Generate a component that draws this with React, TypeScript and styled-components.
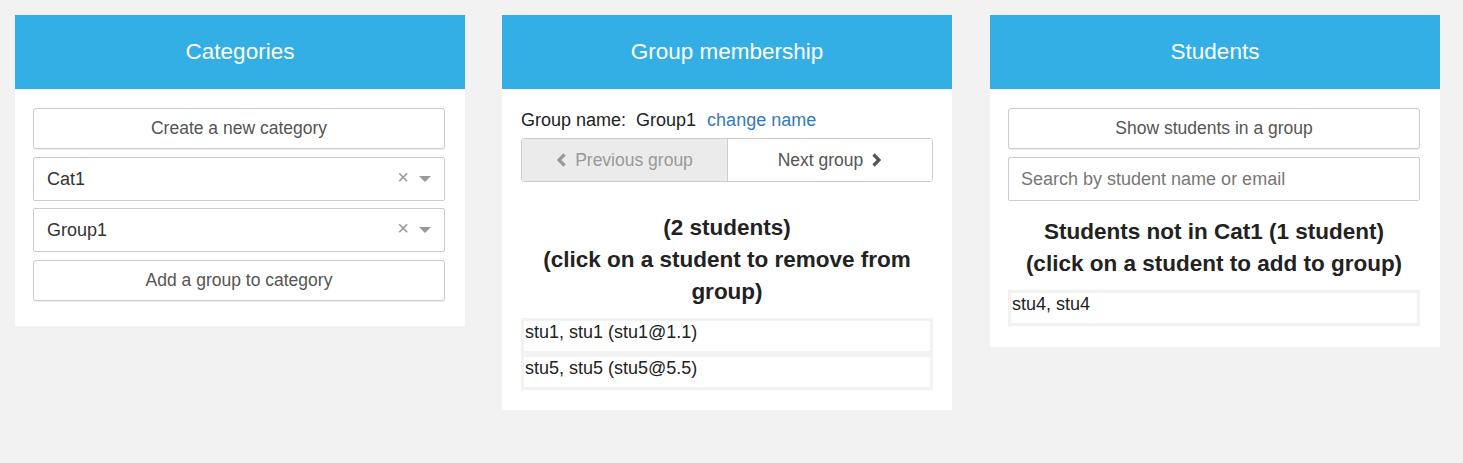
import React from 'react'
import styled, { createGlobalStyle } from 'styled-components'

const Global = createGlobalStyle`
  html, body {
    margin: 0;
    background: #f2f2f2;
    font-family: "Liberation Sans", Arial, sans-serif;
    color: #333;
  }
`

const Page = styled.div`
  display: flex;
  align-items: flex-start;
  gap: 37px;
  padding: 15px;
`

const Panel = styled.section<{ $shift?: number }>`
  width: 450px;
  background: #fff;
  flex-shrink: 0;
  margin-left: ${p => p.$shift ?? 0}px;
`

const Header = styled.h2`
  margin: 0;
  height: 74px;
  background: #33afe6;
  color: #fff;
  font-size: 22.5px;
  font-weight: normal;
  display: flex;
  align-items: center;
  justify-content: center;
`

const Body = styled.div<{ $bottom?: number; $left?: number }>`
  padding: 19px ${p => 38 - (p.$left ?? 18)}px ${p => p.$bottom ?? 20}px ${p => p.$left ?? 18}px;
  display: flex;
  flex-direction: column;
`

const Button = styled.button`
  height: 41px;
  width: 100%;
  background: #fff;
  border: 1px solid #ccc;
  border-radius: 3px;
  box-shadow: 0 1px 1px rgba(0, 0, 0, 0.08);
  font-family: inherit;
  font-size: 17.5px;
  color: #555;
  cursor: pointer;
`

const SelectBox = styled.div`
  height: 44px;
  box-sizing: border-box;
  border: 1px solid #ccc;
  border-radius: 2px;
  display: flex;
  align-items: center;
  padding: 0 13px 0 13px;
  font-size: 18px;
  color: #333;
`

const SelectValue = styled.span`
  flex: 1;
`

const Clear = styled.span`
  color: #999;
  font-size: 20px;
  margin-right: 10px;
  line-height: 1;
  margin-top: -4px;
`

const Caret = styled.span`
  width: 0;
  height: 0;
  border-left: 6px solid transparent;
  border-right: 6px solid transparent;
  border-top: 6px solid #999;
`

const Stack = styled.div<{ $gap: number }>`
  display: flex;
  flex-direction: column;
  gap: ${p => p.$gap}px;
`

const GroupLine = styled.div`
  font-size: 18px;
  line-height: 22px;
  color: #222;
  margin: 1px 0 7px;
`

const Link = styled.a`
  color: #337ab7;
  margin-left: 11px;
  cursor: pointer;
`

const ButtonGroup = styled.div`
  display: grid;
  grid-template-columns: 1fr 1fr;
  height: 42px;
  border: 1px solid #ccc;
  border-radius: 3px;
  overflow: hidden;
`

const NavButton = styled.button<{ $disabled?: boolean }>`
  border: none;
  border-left: ${p => (p.$disabled ? 'none' : '1px solid #ccc')};
  background: ${p => (p.$disabled ? '#ebebeb' : '#fff')};
  color: ${p => (p.$disabled ? '#999' : '#555')};
  font-family: inherit;
  font-size: 17.5px;
  display: flex;
  align-items: center;
  justify-content: center;
  gap: 8px;
`

const Heading = styled.h3<{ $top: number }>`
  margin: ${p => p.$top}px 0 10px;
  text-align: center;
  font-size: 22.5px;
  line-height: 32px;
  font-weight: bold;
  color: #222;
`

const List = styled.div`
  display: flex;
  flex-direction: column;
`

const Item = styled.div`
  border: 3px solid #f2f2f2;
  height: 30px;
  padding: 0 1px;
  font-size: 18px;
  line-height: 22px;
  color: #222;
  cursor: pointer;
`

const SearchInput = styled.input`
  height: 44px;
  box-sizing: border-box;
  border: 1px solid #ccc;
  border-radius: 2px;
  padding: 0 12px;
  font-family: inherit;
  font-size: 18px;
  color: #333;
  &::placeholder {
    color: #777;
  }
`

const Chevron = ({ dir }: { dir: 'left' | 'right' }) => (
  <svg width="11" height="14" viewBox="0 0 11 14">
    <path
      d={dir === 'left' ? 'M8.5 1.5 L3 7 L8.5 12.5' : 'M2.5 1.5 L8 7 L2.5 12.5'}
      fill="none"
      stroke="currentColor"
      strokeWidth="3.2"
    />
  </svg>
)

const Select = ({ value }: { value: string }) => (
  <SelectBox>
    <SelectValue>{value}</SelectValue>
    <Clear>×</Clear>
    <Caret />
  </SelectBox>
)

const App: React.FC = () => (
  <>
    <Global />
    <Page>
      <Panel>
        <Header>Categories</Header>
        <Body $bottom={25}>
          <Stack $gap={8}>
            <Button>Create a new category</Button>
            <Stack $gap={7}>
              <Select value="Cat1" />
              <Select value="Group1" />
            </Stack>
            <Button>Add a group to category</Button>
          </Stack>
        </Body>
      </Panel>
      <Panel>
        <Header>Group membership</Header>
        <Body $bottom={20} $left={19}>
          <GroupLine>
            Group name:&nbsp; Group1
            <Link>change name</Link>
          </GroupLine>
          <ButtonGroup>
            <NavButton $disabled>
              <Chevron dir="left" />
              Previous group
            </NavButton>
            <NavButton>
              Next group
              <Chevron dir="right" />
            </NavButton>
          </ButtonGroup>
          <Heading $top={30}>
            (2 students)
            <br />
            (click on a student to remove from group)
          </Heading>
          <List>
            <Item>stu1, stu1 (stu1@1.1)</Item>
            <Item>stu5, stu5 (stu5@5.5)</Item>
          </List>
        </Body>
      </Panel>
      <Panel $shift={1}>
        <Header>Students</Header>
        <Body $bottom={21}>
          <Stack $gap={8}>
            <Button>Show students in a group</Button>
            <SearchInput placeholder="Search by student name or email" />
          </Stack>
          <Heading $top={15}>
            Students not in Cat1 (1 student)
            <br />
            (click on a student to add to group)
          </Heading>
          <List>
            <Item>stu4, stu4</Item>
          </List>
        </Body>
      </Panel>
    </Page>
  </>
)

export default App
